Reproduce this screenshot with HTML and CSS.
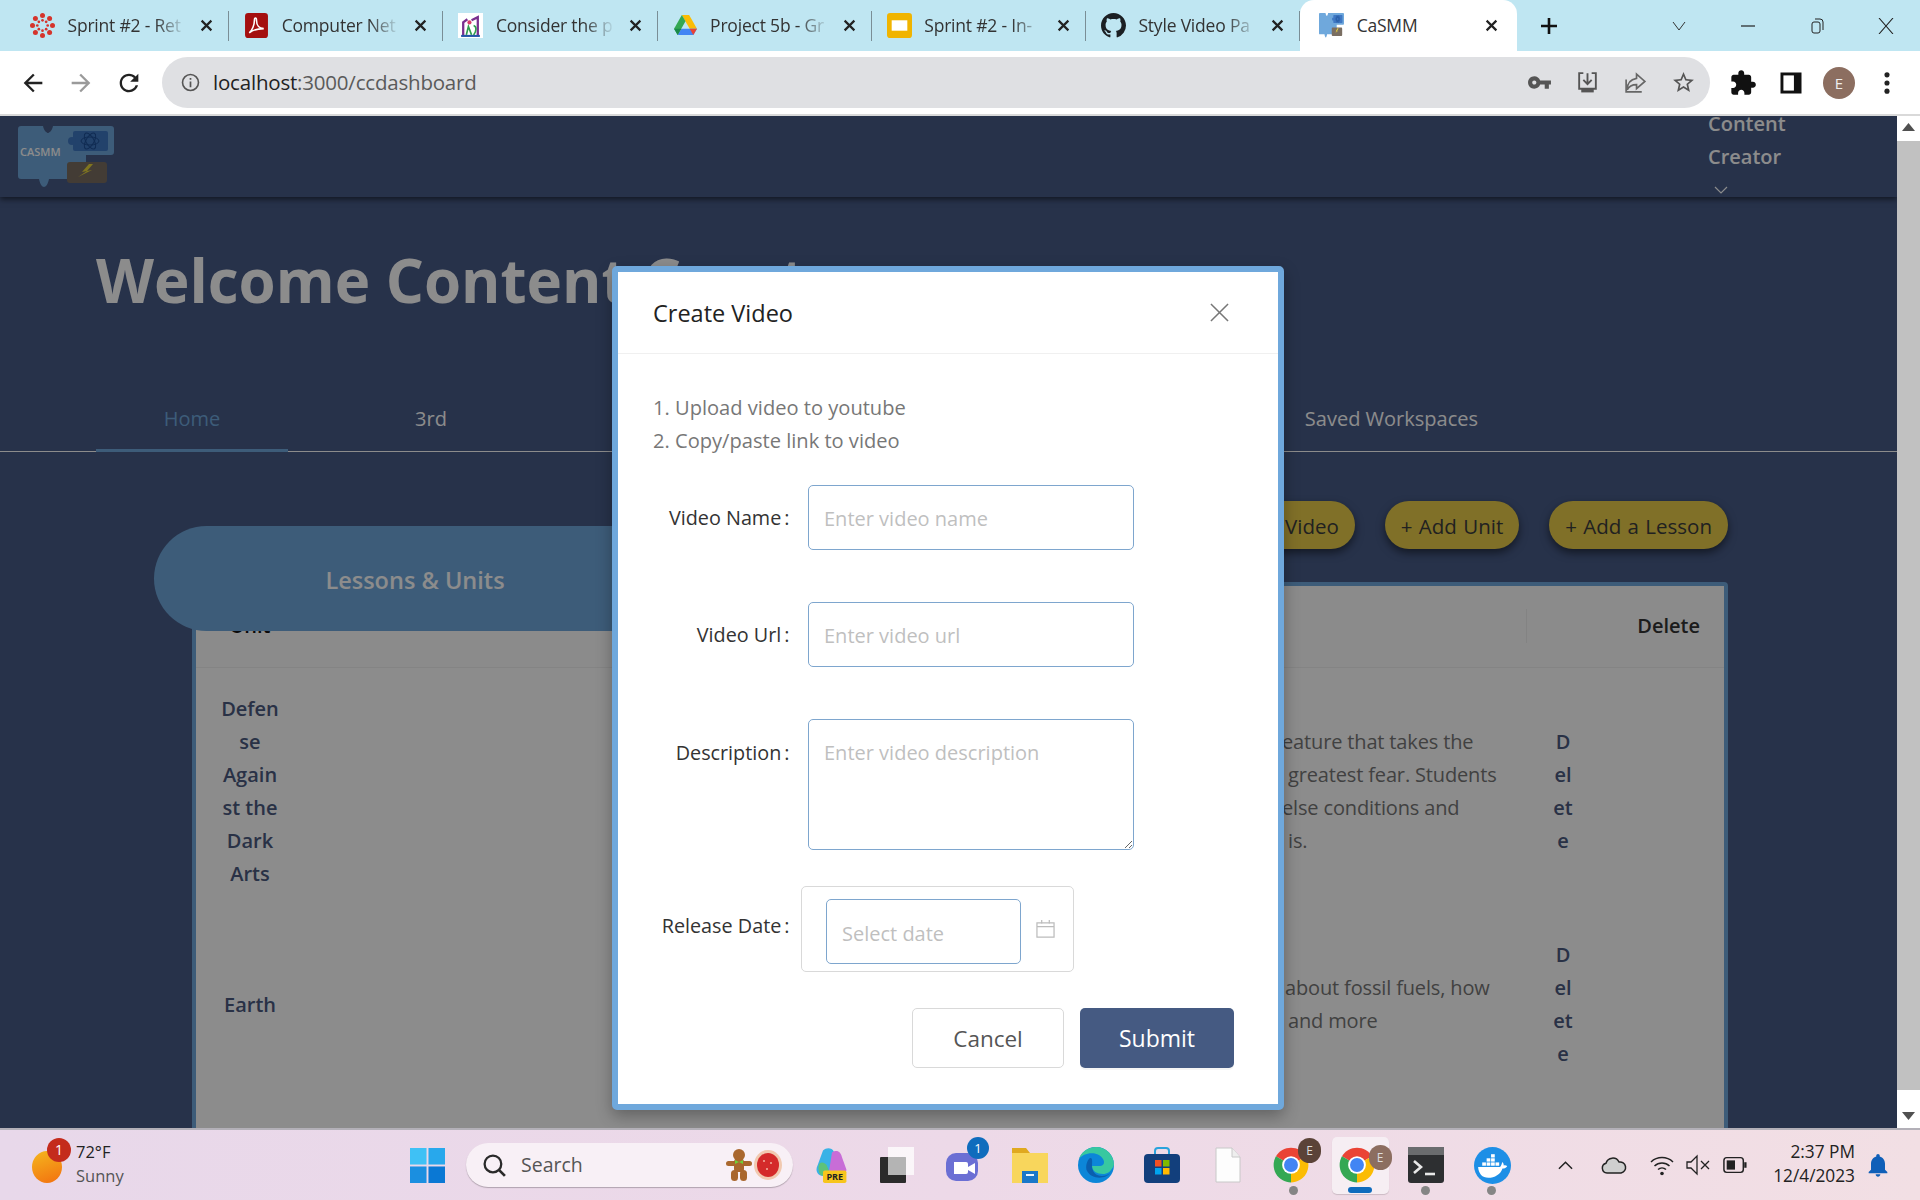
FILE: index.html
```html
<!DOCTYPE html>
<html lang="en">
<head>
<meta charset="utf-8">
<title>CaSMM</title>
<link rel="stylesheet" href="styles.css">
</head>
<body>
<svg class="defs" aria-hidden="true">
  <symbol id="x" viewBox="0 0 12 12"><path d="M1.5 1.5l9 9M10.5 1.5l-9 9" stroke="currentColor" stroke-width="2" fill="none"/></symbol>
  <symbol id="chrome" viewBox="0 0 24 24">
    <path fill="#ea4335" d="M12 12L21.5 6.5A11 11 0 0 0 2.5 6.5Z"/>
    <path fill="#34a853" d="M12 12L2.5 6.5A11 11 0 0 0 12 23Z"/>
    <path fill="#fbbc04" d="M12 12L12 23A11 11 0 0 0 21.5 6.5Z"/>
    <circle cx="12" cy="12" r="5.6" fill="#fff"/><circle cx="12" cy="12" r="4.4" fill="#4285f4"/>
  </symbol>
  <symbol id="block" viewBox="0 0 96 62" preserveAspectRatio="none">
    <path fill="#6fa8dc" d="M0 3a3 3 0 0 1 3-3h22c1 5 4 7 5 7s4-2 5-7h58a3 3 0 0 1 3 3v23a3 3 0 0 1-3 3H68v24H31c-1 5-3 8-5 8s-4-3-5-8H3a3 3 0 0 1-3-3z"/>
    <rect x="55" y="5" width="35" height="20" rx="2" fill="#3f78c4"/>
    <circle cx="54" cy="15" r="4" fill="#3f78c4"/>
    <rect x="49" y="36" width="40" height="21" rx="3" fill="#7a6e62"/>
    <path fill="#e9d53a" d="M71 38l-7 8 5-1-9 6 14-7-5 1 6-7z"/>
    <g fill="none" stroke="#1d4f96" stroke-width="1"><ellipse cx="72" cy="15" rx="9" ry="4" transform="rotate(60 72 15)"/><ellipse cx="72" cy="15" rx="9" ry="4" transform="rotate(-60 72 15)"/><ellipse cx="72" cy="15" rx="9" ry="4" transform="rotate(0 72 15)"/></g>
  </symbol>
</svg>

<header class="tabstrip">
  <div class="tab">
    <svg class="fav" viewBox="0 0 24 24"><g fill="#d5342c"><circle cx="12" cy="2.4" r="2.4"/><circle cx="12" cy="21.6" r="2.4"/><circle cx="2.4" cy="12" r="2.4"/><circle cx="21.6" cy="12" r="2.4"/><circle cx="5.2" cy="5.2" r="2.4"/><circle cx="18.8" cy="5.2" r="2.4"/><circle cx="5.2" cy="18.8" r="2.4"/><circle cx="18.8" cy="18.8" r="2.4"/><circle cx="12" cy="7" r="1.3"/><circle cx="12" cy="17" r="1.3"/><circle cx="7" cy="12" r="1.3"/><circle cx="17" cy="12" r="1.3"/><circle cx="8.5" cy="8.5" r="1.3"/><circle cx="15.5" cy="8.5" r="1.3"/><circle cx="8.5" cy="15.5" r="1.3"/><circle cx="15.5" cy="15.5" r="1.3"/></g></svg>
    <span class="tab-title">Sprint #2 - Ret</span>
    <svg class="tab-x"><use href="#x"/></svg>
  </div>
  <div class="tab">
    <svg class="fav" viewBox="0 0 24 24"><rect x="1" y="0" width="22" height="24" rx="3" fill="#a40f0f"/><path d="M5 19c3-2 5-8 5-12 0-3 2-3 2 0 0 5 3 8 7 8-5 0-10 1-14 4z" fill="none" stroke="#fff" stroke-width="1.5"/></svg>
    <span class="tab-title">Computer Net</span>
    <svg class="tab-x"><use href="#x"/></svg>
  </div>
  <div class="tab">
    <svg class="fav" viewBox="0 0 24 24"><rect width="24" height="24" fill="#fff"/><path d="M5 21V9l4-3M19 21V4l-6 3" fill="none" stroke="#7a2f8f" stroke-width="2.2"/><path d="M8 21l2-8 3 8M15 12c3 1 3 5 0 9" fill="none" stroke="#2e9d4c" stroke-width="1.6"/><circle cx="11" cy="9" r="2" fill="#d83b6a"/><path d="M3 22h18" stroke="#2456a8" stroke-width="2"/></svg>
    <span class="tab-title">Consider the p</span>
    <svg class="tab-x"><use href="#x"/></svg>
  </div>
  <div class="tab">
    <svg class="fav" viewBox="0 0 24 24"><path d="M8.5 2h7l7.5 13h-7z" fill="#fbbc04"/><path d="M8.5 2L1 15l3.5 6L12 8z" fill="#34a853"/><path d="M4.5 21h15L23 15H8z" fill="#4285f4"/><path d="M4.5 21L8 15H1z" fill="#1a8a4a"/><path d="M19.5 21L23 15h-7z" fill="#ea4335"/></svg>
    <span class="tab-title">Project 5b - Gr</span>
    <svg class="tab-x"><use href="#x"/></svg>
  </div>
  <div class="tab">
    <svg class="fav" viewBox="0 0 24 24"><rect x="0" y="0" width="24" height="24" rx="3" fill="#f0b400"/><rect x="4.5" y="7" width="15" height="10" fill="#fff"/></svg>
    <span class="tab-title">Sprint #2 - In-</span>
    <svg class="tab-x"><use href="#x"/></svg>
  </div>
  <div class="tab">
    <svg class="fav" viewBox="0 0 16 16"><path fill="#1b1f23" d="M8 0C3.58 0 0 3.58 0 8c0 3.54 2.29 6.53 5.47 7.59.4.07.55-.17.55-.38 0-.19-.01-.82-.01-1.49-2.01.37-2.53-.49-2.69-.94-.09-.23-.48-.94-.82-1.13-.28-.15-.68-.52-.01-.53.63-.01 1.08.58 1.23.82.72 1.21 1.87.87 2.33.66.07-.52.28-.87.51-1.07-1.78-.2-3.64-.89-3.64-3.95 0-.87.31-1.59.82-2.15-.08-.2-.36-1.02.08-2.12 0 0 .67-.21 2.2.82.64-.18 1.32-.27 2-.27.68 0 1.36.09 2 .27 1.53-1.04 2.2-.82 2.2-.82.44 1.1.16 1.92.08 2.12.51.56.82 1.27.82 2.15 0 3.07-1.87 3.75-3.65 3.95.29.25.54.73.54 1.48 0 1.07-.01 1.93-.01 2.2 0 .21.15.46.55.38A8.013 8.013 0 0016 8c0-4.42-3.58-8-8-8z"/></svg>
    <span class="tab-title">Style Video Pa</span>
    <svg class="tab-x"><use href="#x"/></svg>
  </div>
  <div class="tab tab-active">
    <svg class="fav"><use href="#block"/></svg>
    <span class="tab-title tab-title-full">CaSMM</span>
    <svg class="tab-x"><use href="#x"/></svg>
  </div>
  <svg class="newtab" viewBox="0 0 20 20"><path d="M10 2v16M2 10h16" stroke="#111" stroke-width="2.6"/></svg>
  <div class="winctl">
    <svg class="wc" viewBox="0 0 16 16"><path d="M2 4l6 8 6-8" fill="none" stroke="#333" stroke-width="1"/></svg>
    <svg class="wc" viewBox="0 0 16 16"><path d="M1 8h14" stroke="#222" stroke-width="1.2"/></svg>
    <svg class="wc" viewBox="0 0 16 16"><rect x="3" y="4" width="8" height="11" rx="2" fill="none" stroke="#222"/><path d="M6 1h5a3 3 0 0 1 3 3v8" fill="none" stroke="#222"/></svg>
    <svg class="wc" viewBox="0 0 16 16"><path d="M1 0l14 16M15 0L1 16" stroke="#222" stroke-width="1.1"/></svg>
  </div>
</header>

<nav class="toolbar">
  <svg class="tool" viewBox="0 0 24 24"><path fill="#222" d="M20 11H7.83l5.59-5.59L12 4l-8 8 8 8 1.41-1.41L7.83 13H20v-2z"/></svg>
  <svg class="tool" viewBox="0 0 24 24"><path fill="#9a9a9a" d="M4 11h12.17l-5.59-5.59L12 4l8 8-8 8-1.41-1.41L16.17 13H4v-2z"/></svg>
  <svg class="tool" viewBox="0 0 24 24"><path fill="#222" d="M17.65 6.35C16.2 4.9 14.21 4 12 4c-4.42 0-7.99 3.58-7.99 8s3.57 8 7.99 8c3.73 0 6.84-2.55 7.73-6h-2.08c-.82 2.33-3.04 4-5.65 4-3.31 0-6-2.69-6-6s2.69-6 6-6c1.66 0 3.14.69 4.22 1.78L13 11h7V4l-2.35 2.35z"/></svg>
  <div class="omnibox">
    <svg class="info" viewBox="0 0 20 20"><circle cx="10" cy="10" r="8.4" fill="none" stroke="#555" stroke-width="1.7"/><path d="M10 9v6M10 5.2v2" stroke="#555" stroke-width="1.8"/></svg>
    <span class="url"><span class="url-host">localhost</span>:3000/ccdashboard</span>
    <div class="omni-icons">
      <svg class="omni-i" viewBox="0 0 24 24"><path fill="#555" d="M12.65 10C11.83 7.67 9.61 6 7 6c-3.31 0-6 2.69-6 6s2.69 6 6 6c2.61 0 4.83-1.67 5.65-4H17v4h4v-4h2v-4H12.65zM7 14c-1.1 0-2-.9-2-2s.9-2 2-2 2 .9 2 2-.9 2-2 2z"/></svg>
      <svg class="omni-i" viewBox="0 0 24 24"><path d="M8 3H4v15h16V3h-4" fill="none" stroke="#555" stroke-width="1.8"/><path d="M12 3v10M8 9.5l4 4 4-4" fill="none" stroke="#555" stroke-width="1.8"/><rect x="6" y="18" width="12" height="3.5" fill="#555"/></svg>
      <svg class="omni-i" viewBox="0 0 24 24"><path d="M13 4l8 7-8 7v-4c-4 0-7 1-9 5 0-6 3-10 9-11z" fill="none" stroke="#666" stroke-width="1.6"/><path d="M3 9v12h15" fill="none" stroke="#666" stroke-width="1.6"/></svg>
      <svg class="omni-i" viewBox="0 0 24 24"><path fill="#555" d="M22 9.24l-7.19-.62L12 2 9.19 8.63 2 9.24l5.46 4.73L5.82 21 12 17.27 18.18 21l-1.63-7.03L22 9.24zM12 15.4l-3.76 2.27 1-4.28-3.32-2.88 4.38-.38L12 6.1l1.71 4.04 4.38.38-3.32 2.88 1 4.28L12 15.4z"/></svg>
    </div>
  </div>
  <div class="tool-right">
    <svg class="tool-r" viewBox="0 0 24 24"><path fill="#111" d="M20.5 11H19V7c0-1.1-.9-2-2-2h-4V3.5C13 2.12 11.88 1 10.5 1S8 2.12 8 3.5V5H4c-1.1 0-1.99.9-1.99 2v3.8H3.5c1.49 0 2.7 1.21 2.7 2.7s-1.21 2.7-2.7 2.7H2V20c0 1.1.9 2 2 2h3.8v-1.5c0-1.49 1.21-2.7 2.7-2.7 1.49 0 2.7 1.21 2.7 2.7V22H17c1.1 0 2-.9 2-2v-4h1.5c1.38 0 2.5-1.12 2.5-2.5S21.88 11 20.5 11z"/></svg>
    <svg class="tool-r" viewBox="0 0 24 24"><rect x="3" y="3" width="18" height="18" fill="#111"/><rect x="5.5" y="5.5" width="9" height="13" fill="#fff"/></svg>
    <span class="avatar">E</span>
    <svg class="tool-r" viewBox="0 0 24 24"><g fill="#222"><circle cx="12" cy="5" r="2.2"/><circle cx="12" cy="12" r="2.2"/><circle cx="12" cy="19" r="2.2"/></g></svg>
  </div>
</nav>

<main class="viewport">
  <div class="page">
    <div class="site-header">
      <svg class="logo" viewBox="0 0 96 62"><use href="#block"/><text x="2" y="30" class="logo-text">CASMM</text></svg>
      <div class="user-menu">
        <span>Content</span><span>Creator</span>
        <svg class="chev" viewBox="0 0 14 10"><path d="M1 2l6 6 6-6" fill="none" stroke="#fff" stroke-width="1.2"/></svg>
      </div>
    </div>
    <h1 class="welcome">Welcome Content Creator</h1>
    <div class="nav-tabs">
      <span class="nav-tab nav-home">Home</span>
      <span class="nav-tab nav-3rd">3rd</span>
      <span class="nav-tab nav-saved">Saved Workspaces</span>
    </div>
    <section class="content">
      <div class="actions">
        <button class="pill-btn">+ Add Video</button>
        <button class="pill-btn">+ Add Unit</button>
        <button class="pill-btn">+ Add a Lesson</button>
      </div>
      <div class="table-wrap">
        <div class="table-title">Lessons &amp; Units</div>
        <div class="table">
          <div class="row row-head">
            <div class="cell cell-unit">Unit</div>
            <div></div><div></div>
            <div class="cell-del-head">Delete</div>
          </div>
          <div class="row">
            <div class="cell cell-unit">Defen<br>se<br>Again<br>st the<br>Dark<br>Arts</div>
            <div></div>
            <div class="cell-desc"><span class="cut">eature that takes the</span><span>greatest fear. Students</span><span class="cut">else conditions and</span><span>is.</span></div>
            <div class="cell-del">D<br>el<br>et<br>e</div>
          </div>
          <div class="row">
            <div class="cell cell-unit">Earth</div>
            <div></div>
            <div class="cell-desc"><span class="cut2">about fossil fuels, how</span><span>and more</span></div>
            <div class="cell-del">D<br>el<br>et<br>e</div>
          </div>
        </div>
      </div>
    </section>
  </div>
  <div class="mask"></div>
  <div class="scrollbar">
    <svg class="sb-arrow" viewBox="0 0 10 6"><path d="M5 0l5 6H0z" fill="#505050"/></svg>
    <div class="sb-thumb"></div>
    <svg class="sb-arrow" viewBox="0 0 10 6"><path d="M0 0h10L5 6z" fill="#505050"/></svg>
  </div>

  <div class="modal">
    <div class="modal-head">
      <span class="modal-title">Create Video</span>
      <svg class="modal-x" viewBox="0 0 20 20"><path d="M1 1l18 18M19 1L1 19" stroke="#777" stroke-width="1.6"/></svg>
    </div>
    <div class="modal-body">
      <div class="intro"><div>1. Upload video to youtube</div><div>2. Copy/paste link to video</div></div>
      <div class="field f1"><label class="lbl">Video Name<i>:</i></label><input class="inp" placeholder="Enter video name"></div>
      <div class="field f2"><label class="lbl">Video Url<i>:</i></label><input class="inp" placeholder="Enter video url"></div>
      <div class="field f3"><label class="lbl lbl-top">Description<i>:</i></label><textarea class="inp txt" placeholder="Enter video description"></textarea></div>
      <div class="field f4"><label class="lbl">Release Date<i>:</i></label>
        <div class="date">
          <input class="inp inp-date" placeholder="Select date">
          <svg class="cal" viewBox="0 0 20 20"><path d="M1 4h18v15H1zM1 8h18M6 1v4M14 1v4" fill="none" stroke="#bcbcbc" stroke-width="1.3"/></svg>
        </div>
      </div>
      <div class="modal-foot"><button class="btn btn-cancel">Cancel</button><button class="btn btn-submit">Submit</button></div>
    </div>
  </div>
</main>

<footer class="taskbar">
  <div class="weather">
    <span class="sun"><span class="sun-badge">1</span></span>
    <div class="w-text"><div class="w-temp">72°F</div><div class="w-desc">Sunny</div></div>
  </div>
  <div class="slot"><svg class="ico-win" viewBox="0 0 36 36"><rect width="17" height="17" x="0" y="0" fill="#3fc1f5"/><rect width="17" height="17" x="19" y="0" fill="#28a8ec"/><rect width="17" height="17" x="0" y="19" fill="#1b8fe0"/><rect width="17" height="17" x="19" y="19" fill="#0a78d4"/></svg></div>
  <div class="search">
    <svg class="mag" viewBox="0 0 24 24"><circle cx="10.5" cy="10.5" r="8" fill="none" stroke="#2a2a2a" stroke-width="2.2"/><path d="M16 16l6 6" stroke="#2a2a2a" stroke-width="2.6"/></svg>
    <span class="search-text">Search</span>
    <svg class="ginger" viewBox="0 0 56 32"><g fill="#a9672e"><circle cx="13" cy="6" r="6"/><rect x="8" y="10" width="10" height="13" rx="3"/><rect x="0" y="12" width="26" height="5" rx="2.5"/><rect x="5" y="21" width="7" height="11" rx="3.5"/><rect x="14" y="21" width="7" height="11" rx="3.5"/></g><path d="M9 11l4 2 4-2v4l-4-2-4 2z" fill="#6fcf3a"/><ellipse cx="42" cy="16" rx="14" ry="15" fill="#f1c9b0"/><ellipse cx="42" cy="16" rx="11" ry="12" fill="#d42a2a"/><g fill="#f2b0a0"><circle cx="38" cy="12" r="1"/><circle cx="45" cy="14" r="1"/><circle cx="41" cy="20" r="1"/></g></svg>
  </div>
  <div class="slot"><svg class="ico" viewBox="0 0 36 40"><path d="M8 4c4-4 10-3 12 1l8 20c1 5-3 8-8 7H8c-5 0-8-4-7-9z" fill="#39b2e6"/><path d="M18 6c6-4 10 0 11 5l5 14c0 5-5 7-9 6H14z" fill="#c86dd7"/><path d="M3 22c0-6 6-6 9-2l5 12H8c-4 0-5-5-5-10z" fill="#5dc27a"/><rect x="8" y="26" width="26" height="14" rx="2" fill="#f7c51d"/><text x="21" y="37" class="pre">PRE</text></svg></div>
  <div class="slot"><svg class="ico" viewBox="0 0 36 36"><rect x="8" y="0" width="26" height="28" fill="#fff" opacity=".75"/><rect x="0" y="10" width="26" height="26" rx="1" fill="#2b2b2b"/><rect x="8" y="10" width="18" height="18" fill="#ccc" opacity=".85"/></svg></div>
  <div class="slot slot-rel"><svg class="ico" viewBox="0 0 36 36"><rect x="0" y="6" width="32" height="28" rx="10" fill="#6b6fd4"/><path d="M8 15h12a2 2 0 0 1 2 2v8a2 2 0 0 1-2 2H8z" fill="#fff"/><path d="M22 20l7-4v11l-7-4z" fill="#fff"/></svg><span class="t-badge">1</span></div>
  <div class="slot"><svg class="ico" viewBox="0 0 36 36"><path d="M0 1h14l4 5h16v30H0z" fill="#e0a91f"/><rect x="0" y="6" width="36" height="30" fill="#f8d65c"/><rect x="10" y="24" width="16" height="12" fill="#1977c9"/><rect x="14" y="27" width="8" height="2" fill="#e8f2fb"/></svg></div>
  <div class="slot"><svg class="ico" viewBox="0 0 36 36"><circle cx="18" cy="18" r="18" fill="#0c86d8"/><path d="M36 18C36 8 28 0 18 0 10 0 3 5 1 12c4-6 18-9 24 0 2 3 1 7-3 7h-8c0 5 5 8 11 8 4 0 8-2 11-9z" fill="#38c8a0"/><path d="M14 19c0 6 4 10 10 10 3 0 6-1 8-3-4 6-18 7-23-2-2-4 0-11 3-13 3-1 2 5 2 8z" fill="#0a5fae"/></svg></div>
  <div class="slot"><svg class="ico" viewBox="0 0 36 36"><path d="M11 10V4a3 3 0 0 1 3-3h8a3 3 0 0 1 3 3v6" fill="none" stroke="#29a3dc" stroke-width="2"/><rect x="0" y="7" width="36" height="29" rx="4" fill="#123f7c"/><rect x="11" y="13" width="6.5" height="6.5" fill="#f25022"/><rect x="19" y="13" width="6.5" height="6.5" fill="#7fba00"/><rect x="11" y="21" width="6.5" height="6.5" fill="#00a4ef"/><rect x="19" y="21" width="6.5" height="6.5" fill="#ffb900"/></svg></div>
  <div class="slot"><svg class="ico-file" viewBox="0 0 26 36"><path d="M1 1h16l8 9v25H1z" fill="#fdfdfd" stroke="#c8c8c8"/><path d="M17 1v9h8" fill="#eee" stroke="#c8c8c8"/></svg></div>
  <div class="slot slot-rel"><svg class="ico-ch"><use href="#chrome"/></svg><span class="ch-badge">E</span><span class="dot"></span></div>
  <div class="slot slot-rel slot-active"><svg class="ico-ch"><use href="#chrome"/></svg><span class="ch-badge ch-badge-light">E</span><span class="bar"></span></div>
  <div class="slot slot-rel"><svg class="ico" viewBox="0 0 36 36"><rect width="36" height="36" rx="3" fill="#2d2f31"/><rect x="0" width="36" height="8" fill="#6a6c6e"/><path d="M6 14l7 6-7 6" fill="none" stroke="#e8e8e8" stroke-width="2.6"/><path d="M17 27h10" stroke="#e8e8e8" stroke-width="2.6"/></svg><span class="dot"></span></div>
  <div class="slot slot-rel"><svg class="ico-docker" viewBox="0 0 36 36"><circle cx="18" cy="18" r="18" fill="#1d8fe6" /><g fill="#fff"><rect x="8" y="15" width="3.6" height="3.2"/><rect x="12.3" y="15" width="3.6" height="3.2"/><rect x="16.6" y="15" width="3.6" height="3.2"/><rect x="12.3" y="11" width="3.6" height="3.2"/><rect x="16.6" y="11" width="3.6" height="3.2"/><rect x="16.6" y="7" width="3.6" height="3.2"/><rect x="20.9" y="15" width="3.6" height="3.2"/><path d="M4 19.5h21c1 0 2-3 2.5-5 1 .8 1.5 2.2 1.4 3.4 1.5-.4 2.8 0 3.4.8-1 1.8-3 2.3-4.6 2.2C26 26.5 20 30 14 30c-6 0-9.5-4-10-10.5z"/></g></svg><span class="dot"></span></div>
  <div class="tray">
    <svg class="tr tr-caret" viewBox="0 0 16 10"><path d="M1 9l7-7 7 7" fill="none" stroke="#222" stroke-width="1.6"/></svg>
    <svg class="tr tr-cloud" viewBox="0 0 26 20"><path d="M6 18a5 5 0 0 1-1-9.8A7 7 0 0 1 18 7a5.5 5.5 0 0 1 2 11z" fill="#cfcfcf" stroke="#222" stroke-width="1.5"/></svg>
    <svg class="tr tr-wifi" viewBox="0 0 24 22"><g fill="none" stroke="#222" stroke-width="1.5"><path d="M1 8a16 16 0 0 1 22 0"/><path d="M4.5 12a11 11 0 0 1 15 0"/><path d="M8 15.5a6 6 0 0 1 8 0"/></g><circle cx="12" cy="19.5" r="1.8" fill="#222"/></svg>
    <svg class="tr tr-vol" viewBox="0 0 24 22"><path d="M1 8h4l6-6v18l-6-6H1z" fill="none" stroke="#222" stroke-width="1.3"/><path d="M15 7l8 8M23 7l-8 8" stroke="#222" stroke-width="1.3"/></svg>
    <svg class="tr tr-bat" viewBox="0 0 26 18"><rect x="1" y="1" width="21" height="16" rx="3" fill="none" stroke="#222" stroke-width="1.6"/><rect x="4" y="4" width="9" height="10" fill="#222"/><rect x="23" y="6" width="2.5" height="6" fill="#222"/></svg>
    <div class="clock"><div>2:37 PM</div><div>12/4/2023</div></div>
    <svg class="tr-bell" viewBox="0 0 24 24"><path fill="#0f5fb8" d="M12 22c1.1 0 2-.9 2-2h-4c0 1.1.9 2 2 2zm6-6v-5c0-3.07-1.63-5.64-4.5-6.32V4c0-.83-.67-1.5-1.5-1.5s-1.5.67-1.5 1.5v.68C7.64 5.36 6 7.92 6 11v5l-2 2v1h16v-1l-2-2z"/></svg>
  </div>
</footer>
</body>
</html>
```

FILE: styles.css
```css
* { box-sizing: border-box; }
html, body { margin: 0; height: 100%; }
body {
  width: 1920px; height: 1200px; overflow: hidden;
  display: flex; flex-direction: column;
  font-family: "Open Sans", "Noto Sans", sans-serif;
  color: #222;
  background: #fff;
}
.defs { width: 0; height: 0; position: absolute; }

/* tab strip */
.tabstrip { height: 51px; flex: none; background: #bfe6f2; display: flex; align-items: stretch; padding-left: 15px; }
.tab { width: 214.2px; flex: none; display: flex; align-items: center; padding: 0 16px 0 15px; position: relative; font-size: 17.5px; letter-spacing: -.2px; }
.tab::after { content: ""; position: absolute; right: 0; top: 11px; height: 30px; width: 1px; background: #7a8e96; }
.fav { width: 25px; height: 25px; flex: none; margin-right: 12.5px; }
.tab-title { flex: 1; white-space: nowrap; overflow: hidden; color: #333; padding-bottom: 2px; -webkit-mask-image: linear-gradient(to right, #000 74%, transparent 100%); mask-image: linear-gradient(to right, #000 74%, transparent 100%); margin-right: 14px; }
.tab-title-full { -webkit-mask-image: none; mask-image: none; }
.tab-x { width: 13px; height: 13px; flex: none; color: #222; }
.tab-active { background: #fff; border-radius: 14px 14px 0 0; width: 217px; padding: 0 19px 0 19px; }
.tab-active::after { display: none; }
.newtab { width: 20px; height: 20px; align-self: center; margin-left: 22px; }
.winctl { margin-left: auto; display: flex; align-items: center; padding-right: 26px; gap: 53px; }
.wc { width: 16px; height: 16px; }

/* toolbar */
.toolbar { height: 65px; flex: none; display: flex; align-items: center; background: #fff; padding-left: 19px; border-bottom: 2px solid #d9d9d9; }
.tool { width: 28px; height: 28px; margin-right: 20px; flex: none; }
.omnibox { width: 1548px; height: 51px; margin-left: -1px; background: #dfe0e3; border-radius: 26px; display: flex; align-items: center; padding: 0 14px 0 19px; flex: none; }
.info { width: 19px; height: 19px; margin-right: 13px; }
.url { font-size: 20.5px; color: #5a5a5a; letter-spacing: -.2px; padding-bottom: 2px; }
.url-host { color: #222; }
.omni-icons { margin-left: auto; display: flex; gap: 23px; }
.omni-i { width: 25px; height: 25px; }
.tool-right { display: flex; align-items: center; margin-left: 19px; gap: 20px; }
.tool-r { width: 28px; height: 28px; }
.avatar { width: 32px; height: 32px; margin: 0 -2px; border-radius: 50%; background: #8c6e60; color: #eee; font-size: 15px; display: flex; align-items: center; justify-content: center; }

/* page */
.viewport { flex: 1; position: relative; display: flex; overflow: hidden; border-bottom: 2px solid #b3b0b8; }
.page { width: 1897px; flex: none; background: #475b87; overflow: hidden; color: #fff; }
.mask { position: absolute; left: 0; top: 0; width: 1897px; bottom: 0; background: rgba(0, 0, 0, .45); }
.site-header { height: 81px; display: flex; align-items: center; justify-content: space-between; padding: 0 90px 0 18px; box-shadow: 0 2px 6px rgba(0,0,0,.6); position: relative; }
.logo { width: 96px; height: 62px; }
.logo-text { font-size: 11px; font-weight: 600; fill: #fff; font-family: "Open Sans", sans-serif; }
.user-menu { width: 99px; display: flex; flex-direction: column; font-size: 20px; font-weight: 600; line-height: 33px; }
.chev { width: 14px; height: 10px; margin: 12px 0 11px 6px; }
.welcome { margin: 0; padding: 40px 0 0 96px; height: 205px; font-size: 60px; line-height: 86px; font-weight: 700; white-space: nowrap; }
.nav-tabs { display: flex; padding: 0 419px 0 96px; border-bottom: 1px solid #fff; height: 50px; font-size: 20px; }
.nav-tab { line-height: 33px; height: 50px; text-align: center; }
.nav-home { width: 192px; color: #6fa8dc; border-bottom: 3px solid #6fa8dc; }
.nav-3rd { width: 286px; }
.nav-saved { margin-left: auto; }
.content { padding: 49px 169px 0 192px; }
.actions { display: flex; justify-content: flex-end; gap: 30px; margin-bottom: 33px; }
.pill-btn { height: 48px; padding: 1px 16px 0; border: 0; border-radius: 24px; background: #e9cc49; color: #3c3c3c; font: 500 20.5px "Open Sans", sans-serif; word-spacing: 1px; box-shadow: 0 4px 8px rgba(0,0,0,.5); }
.table-wrap { position: relative; }
.table-title { position: absolute; left: -38px; top: -56px; width: 800px; height: 105px; border-radius: 53px 0 0 53px; background: #6fa8dc; font-size: 23.5px; font-weight: 600; display: flex; align-items: center; justify-content: center; padding-right: 278px; padding-top: 2px; }
.table { background: #fff; border: 4px solid #6fa8dc; border-radius: 4px; color: #333; font-size: 20px; line-height: 33px; min-height: 700px; }
.row { display: grid; grid-template-columns: 108px 984px 238px 1fr; align-items: center; padding: 24px 0; }
.row-head { height: 82px; padding: 0 0 2px; border-bottom: 1px solid #f0f0f0; background: #fdfdfd; color: #222; font-weight: 500; }
.cell-unit { text-align: center; font-weight: 550; color: #4b5a80; }
.row-head .cell-unit { color: #111; font-weight: 600; }
.cell-del-head { text-align: right; padding-right: 24px; font-weight: 600; color: #333; border-left: 1px solid #eee; height: 34px; line-height: 34px; }
.cell-desc { display: flex; flex-direction: column; color: #777; white-space: nowrap; letter-spacing: -.15px; }
.cut { margin-left: -6px; }
.cut2 { margin-left: -3px; }
.cell-del { width: 74px; text-align: center; font-weight: 550; color: #4b5a80; }

/* scrollbar */
.scrollbar { width: 23px; flex: none; display: flex; flex-direction: column; align-items: center; background: #fff; padding: 7px 0 8px; position: relative; }
.sb-arrow { width: 13px; height: 8px; flex: none; }
.sb-thumb { width: 100%; height: 949px; margin: 10px 0 auto; background: #c1c1c1; }

/* modal */
.modal { position: absolute; left: 612px; top: 150px; width: 672px; height: 844px; background: #fff; border: 6px solid #6fa8dc; border-radius: 5px; box-shadow: 0 6px 16px rgba(0,0,0,.3); color: #333; }
.modal-head { height: 82px; border-bottom: 1px solid #f0f0f0; display: flex; align-items: center; justify-content: space-between; padding: 0 49px 0 35px; }
.modal-title { font-size: 23.5px; font-weight: 500; color: #222; }
.modal-x { width: 19px; height: 19px; }
.modal-body { padding: 37px 44px 0 35px; }
.intro { font-size: 20.1px; line-height: 33px; color: #777; margin-bottom: 28px; }
.field { display: flex; align-items: center; }
.lbl { width: 136.5px; text-align: right; margin-right: 18.5px; font-size: 19.8px; color: #333; white-space: nowrap; flex: none; }
.lbl i { font-style: normal; margin-left: 3px; }
.lbl-top { align-self: flex-start; padding-top: 17px; line-height: 33px; }
.f1, .f2 { height: 65px; }
.f1 { margin-bottom: 52px; }
.f2 { margin-bottom: 52px; }
.f3 { height: 131px; margin-bottom: 36px; }
.f4 { height: 86px; margin-bottom: 36px; }
.f4 .lbl { margin-right: 11.5px; margin-bottom: 7px; }
.inp { width: 326px; height: 100%; border: 1px solid #7ea6ce; border-radius: 5px; padding: 2px 15px 0; font: 20px "Open Sans", sans-serif; color: #333; outline: 0; background: #fff; }
.inp::placeholder { color: #bfbfbf; opacity: 1; }
.txt { padding: 19px 15px 0; resize: vertical; }
.date { width: 273px; height: 86px; border: 1px solid #d9d9d9; border-radius: 5px; display: flex; align-items: center; padding: 12px 0 7px 24px; }
.inp-date { width: 195px; height: 65px; flex: none; padding-top: 4px; }
.cal { width: 19px; height: 19px; margin: 0 0 6px 15px; }
.modal-foot { display: flex; justify-content: flex-end; gap: 16px; }
.btn { height: 60px; border-radius: 5px; font: 22.5px "Open Sans", sans-serif; }
.btn-cancel { width: 152px; background: #fff; border: 1px solid #d9d9d9; color: #555; }
.btn-submit { width: 154px; background: #455a82; border: 0; color: #fff; box-shadow: 0 2px 0 rgba(0,0,0,.04); font-weight: 500; font-size: 23px; }

/* taskbar */
.taskbar { height: 70px; flex: none; background: linear-gradient(90deg, #e8d8ea 0%, #edd9e8 50%, #f2dfe4 100%); display: flex; align-items: center; }
.weather { width: 394px; flex: none; display: flex; padding-left: 32px; align-items: center; }
.sun { width: 30px; height: 32px; border-radius: 50%; background: linear-gradient(160deg, #f5b71e, #f2700f); position: relative; margin-right: 14px; margin-top: 4px; }
.sun-badge { position: absolute; left: 15px; top: -13px; width: 24px; height: 24px; border-radius: 50%; background: #c42b1c; color: #fff; font-size: 14px; text-align: center; line-height: 24px; }
.w-text { font-size: 16.5px; line-height: 24px; margin-top: -2px; }
.w-desc { color: #555; }
.slot { width: 66px; height: 70px; flex: none; display: flex; align-items: center; justify-content: center; }
.slot-rel { position: relative; }
.ico { width: 36px; height: 36px; }
.ico-win { width: 35px; height: 35px; }
.ico-file { width: 26px; height: 36px; }
.ico-ch { width: 38px; height: 38px; margin-right: 6px; }
.ico-docker { width: 37px; height: 37px; }
.search { width: 327px; height: 44px; margin: 0 6px; flex: none; border-radius: 22px; background: #f8f0f6; box-shadow: 0 1px 1px rgba(0,0,0,.25); display: flex; align-items: center; padding: 0 11px 0 16px; }
.mag { width: 25px; height: 25px; margin-right: 14px; }
.search-text { font-size: 19.5px; color: #555; padding-bottom: 2px; }
.ginger { width: 56px; height: 32px; margin-left: auto; }
.pre { font-size: 10px; font-weight: 700; text-anchor: middle; fill: #222; font-family: "Open Sans", sans-serif; }
.t-badge { position: absolute; left: 36px; top: 7px; width: 22px; height: 22px; border-radius: 50%; background: #0f6cbd; color: #fff; font-size: 13px; text-align: center; line-height: 22px; }
.ch-badge { position: absolute; left: 37px; top: 8px; width: 23px; height: 25px; border-radius: 12px; background: #5b4338; color: #ddd; font-size: 12px; text-align: center; line-height: 25px; }
.ch-badge-light { background: #8c6e60; }
.dot { position: absolute; left: 28px; bottom: 5px; width: 9px; height: 9px; border-radius: 50%; background: #858585; }
.slot-active { background: #f6eef3; border-radius: 5px; height: 57px; width: 57px; margin: 0 4.5px; box-shadow: 0 1px 1px rgba(0,0,0,.15); }
.bar { position: absolute; left: 16px; bottom: 1px; width: 24px; height: 6px; border-radius: 3px; background: #0f6cbd; }
.tray { flex: 1; position: relative; display: flex; align-items: center; padding-left: 33px; }
.tr { flex: none; }
.tr-caret { width: 15px; height: 10px; margin-right: 28px; }
.tr-cloud { width: 26px; height: 20px; margin-right: 23px; }
.tr-wifi { width: 24px; height: 22px; margin-right: 12px; }
.tr-vol { width: 24px; height: 22px; margin-right: 13px; }
.tr-bat { width: 24px; height: 18px; }
.clock { margin-left: auto; text-align: right; font-size: 17.3px; line-height: 24px; color: #222; margin-top: -2px; }
.tr-bell { width: 28px; height: 28px; margin: 0 28px 0 9px; }
```
